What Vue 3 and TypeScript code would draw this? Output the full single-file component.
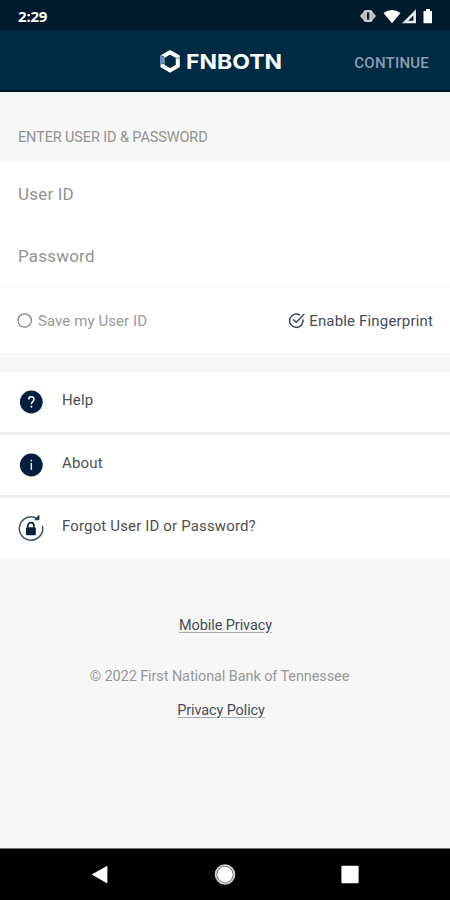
<script setup lang="ts">
import { ref } from 'vue'

const saveUser = ref(false)
const userId = ref('')
const password = ref('')
</script>

<template>
  <div class="screen">
    <div class="status">
      <span class="clock">2:29</span>
      <svg class="status-icons" width="76" height="20" viewBox="0 0 76 20">
        <path d="M1 10 L5 5.5 V14.5 Z M17 10 L13 5.5 V14.5 Z" fill="#c9ccd0" />
        <rect x="4.6" y="4" width="9" height="12" rx="2.5" fill="#c9ccd0" />
        <rect x="7.9" y="6.3" width="2.4" height="7.4" fill="#0a1b2b" />
        <path d="M5 7.5 V12.5 M13.2 7.5 V12.5" stroke="#7c858e" stroke-width=".7" />
        <path d="M24.5 7 Q33 0.8 41.5 7 L33 17.2 Z" fill="#fff" />
        <path d="M57 3.2 V17.2 H43 Z" fill="#e4e6e8" />
        <path d="M54.4 9.5 V14.8 H49.2 Z" fill="#0a1b2b" />
        <path d="M65 5 H67 V3 H71 V5 H73 V17.3 H64.5 V5.5 Z" fill="#fff" />
      </svg>
    </div>

    <header class="bar">
      <div class="brand">
        <svg width="22" height="25" viewBox="0 0 22 25">
          <path d="M11 3.2 L18.8 7.7 V16.9 L11 21.4 L3.4 16.9 V7.7 Z" fill="none" stroke="#fff" stroke-width="4" />
          <path d="M3 7 V14.6" stroke="#5f8dc4" stroke-width="3.6" />
          <path d="M1 15.2 L5.4 14.4 M2 6.2 L5.8 9.2 M17 9.4 L21 8.8" stroke="#002b45" stroke-width=".6" />
        </svg>
        <span class="brand-name">FNBOTN</span>
      </div>
      <button class="continue" type="button">CONTINUE</button>
    </header>

    <main class="content">
      <h1 class="caption">ENTER USER ID &amp; PASSWORD</h1>

      <form class="form" @submit.prevent>
        <input v-model="userId" class="field user" type="text" placeholder="User ID" />
        <input v-model="password" class="field pass" type="password" placeholder="Password" />
        <div class="options">
          <label class="save" @click="saveUser = !saveUser">
            <svg width="16" height="16" viewBox="0 0 16 16">
              <circle cx="7.7" cy="7.5" r="6.7" :fill="saveUser ? '#8c8c8c' : 'none'" stroke="#858585" stroke-width="1.3" />
            </svg>
            <span>Save my User ID</span>
          </label>
          <div class="finger">
            <svg width="18" height="17" viewBox="0 0 18 17">
              <path d="M12 2.1 A6.7 6.7 0 1 0 14.9 6.5" fill="none" stroke="#34445a" stroke-width="1.5" />
              <path d="M5 6.4 L8.2 9.4 L16.3 1" fill="none" stroke="#4a596b" stroke-width="1.7" />
            </svg>
            <span>Enable Fingerprint</span>
          </div>
        </div>
      </form>

      <nav class="menu">
        <a class="row">
          <svg width="28" height="28" viewBox="0 0 28 28">
            <circle cx="14.3" cy="14" r="11.4" fill="#001f3d" />
            <path d="M11.7 11.4 Q11.7 8.7 14.4 8.7 Q17 8.7 17 11.3 Q17 12.7 15.5 13.8 Q14.4 14.7 14.4 16.2" fill="none" stroke="#fff" stroke-width="1.5" />
            <circle cx="14.4" cy="18.8" r="1" fill="#fff" />
          </svg>
          <span class="help-text">Help</span>
        </a>
        <a class="row">
          <svg width="28" height="28" viewBox="0 0 28 28">
            <circle cx="14.3" cy="14" r="11.4" fill="#001f3d" />
            <path d="M14.3 12 V18.8" stroke="#e8edf3" stroke-width="1.5" />
            <circle cx="14.3" cy="9.6" r=".95" fill="#e8edf3" />
          </svg>
          <span class="about-text">About</span>
        </a>
        <a class="row">
          <svg width="28" height="28" viewBox="0 0 28 28">
            <path d="M20.6 4.8 A11.7 11.7 0 1 0 25.4 11.6" fill="none" stroke="#40536a" stroke-width="1.5" />
            <path d="M17.8 5.8 H22 V1.2 Z" fill="#1d334d" stroke="#1d334d" stroke-width=".8" />
            <rect x="9" y="13.2" width="9.8" height="8" rx="1" fill="#001f3d" />
            <path d="M10.9 13.5 V11.6 A3 3 0 0 1 16.9 11.6 V13.5" fill="none" stroke="#001f3d" stroke-width="1.7" />
          </svg>
          <span class="forgot-text">Forgot User ID or Password?</span>
        </a>
      </nav>

      <footer class="footer">
        <a class="link mobile">Mobile Privacy</a>
        <p class="copyright">© 2022 First National Bank of Tennessee</p>
        <a class="link policy">Privacy Policy</a>
      </footer>
    </main>

    <div class="system-nav">
      <svg width="20" height="22" viewBox="0 0 20 22"><path d="M1.6 10.5 L17.4 1.7 V19.6 Z" fill="#fff" /></svg>
      <svg width="22" height="22" viewBox="0 0 22 22">
        <circle cx="11" cy="10.5" r="9.4" fill="#777" stroke="#ccc" stroke-width="1.8" />
        <circle cx="11" cy="10.5" r="7.7" fill="#fff" />
      </svg>
      <svg width="20" height="22" viewBox="0 0 20 22"><rect x="1.4" y="1.8" width="17.2" height="17.4" rx="1.2" fill="#fff" /></svg>
    </div>
  </div>
</template>

<style>
body {
  margin: 0;
  background: #f7f7f7;
}
</style>

<style scoped>
* {
  box-sizing: border-box;
}
.screen {
  width: 450px;
  height: 900px;
  display: flex;
  flex-direction: column;
  overflow: hidden;
  background: #f7f7f7;
  font-family: Roboto, sans-serif;
  white-space: nowrap;
}
svg {
  display: block;
  flex: none;
}
.status {
  height: 31px;
  flex: none;
  display: flex;
  align-items: center;
  justify-content: space-between;
  padding: 1px 15px 0 18px;
  background: #001b2e;
  color: #fff;
}
.clock {
  font: 700 15px/20px 'Open Sans', sans-serif;
  letter-spacing: -0.2px;
}
.bar {
  height: 61px;
  flex: none;
  display: grid;
  grid-template-columns: 1fr auto 1fr;
  align-items: center;
  padding: 2px 21px 0 11px;
  background: #002b45;
  border-bottom: 2px solid #001426;
}
.brand {
  grid-column: 2;
  display: flex;
  align-items: center;
  gap: 5px;
}
.brand-name {
  margin-right: 9px;
  font: 700 20.5px/24px Inter, sans-serif;
  color: #fff;
  transform: scaleX(1.12);
  transform-origin: left center;
}
.continue {
  justify-self: end;
  padding: 2px 0 0;
  border: 0;
  background: none;
  color: #8c9cb1;
  font: 500 15px/20px Roboto, sans-serif;
  letter-spacing: 0.22px;
}
.content {
  flex: 1;
  display: flex;
  flex-direction: column;
}
.caption {
  height: 70px;
  margin: 0;
  padding: 36px 18px 0;
  font-size: 14.5px;
  line-height: 20px;
  font-weight: 400;
  letter-spacing: -0.12px;
  color: #929292;
}
.form {
  height: 191px;
  display: flex;
  flex-direction: column;
  background: #fff;
}
.field {
  width: 100%;
  height: 62px;
  padding: 2px 18px 0;
  border: 0;
  outline: 0;
  background: none;
  font: 400 17px/22px Roboto, sans-serif;
  letter-spacing: 0.2px;
}
.field::placeholder {
  color: #929292;
  opacity: 1;
}
.options {
  flex: 1;
  display: flex;
  align-items: center;
  justify-content: space-between;
  border-top: 1px solid #fafafa;
  padding: 2px 17px 0 17px;
  font-size: 15px;
  line-height: 20px;
}
.save,
.finger {
  display: flex;
  align-items: center;
}
.save {
  gap: 5px;
  color: #999;
  letter-spacing: 0.08px;
}
.finger {
  gap: 3px;
  color: #444c55;
  letter-spacing: 0.17px;
}
.menu {
  margin-top: 19px;
  display: grid;
  grid-template-rows: 60px 60px 60px;
  gap: 3px;
  background: #eee;
}
.row {
  display: flex;
  align-items: center;
  gap: 17px;
  padding-left: 17px;
  background: #fff;
  color: #505050;
  font-size: 15px;
  line-height: 20px;
  letter-spacing: 0.15px;
}
.row span {
  margin-top: -4px;
}
.footer {
  display: flex;
  flex-direction: column;
  align-items: center;
  padding-top: 58px;
  font-size: 14.5px;
  line-height: 20px;
}
.link {
  color: #474d55;
  text-decoration: underline;
  text-decoration-color: #a5adb5;
  text-underline-offset: 2px;
}
.mobile {
  letter-spacing: -0.08px;
  padding-left: 1px;
}
.copyright {
  margin: 31px 11px 14px 0;
  color: #999;
  letter-spacing: -0.1px;
}
.policy {
  letter-spacing: -0.12px;
  margin-right: 8px;
}
.system-nav {
  height: 52px;
  flex: none;
  display: flex;
  align-items: center;
  justify-content: space-between;
  padding: 0 90px;
  border-top: 1px solid #777;
  background: #000;
}
</style>
